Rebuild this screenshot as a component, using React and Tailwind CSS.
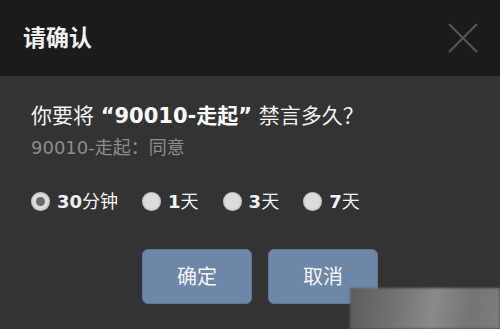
const cjk = { fontFamily: '"DejaVu Sans", "Noto Sans CJK SC", sans-serif' };

const Radio = ({ checked, num, unit }) => (
  <label className="flex items-center gap-[7px] cursor-pointer">
    <span className="flex h-[19px] w-[19px] items-center justify-center rounded-full bg-[#dcdcdc] shadow-[inset_0_0_2px_#888]">
      {checked && <span className="h-[9px] w-[9px] rounded-full bg-[#6a6a6a]" />}
    </span>
    <span className="text-[18px] leading-none text-[#f2f2f2]">
      <span className="font-bold">{num}</span>
      {unit}
    </span>
  </label>
);

export default function App() {
  const options = [
    { num: "30", unit: "分钟", checked: true },
    { num: "1", unit: "天" },
    { num: "3", unit: "天" },
    { num: "7", unit: "天" },
  ];

  return (
    <div className="relative h-[329px] w-[500px] overflow-hidden bg-[#333333]" style={cjk}>
      <div className="flex h-[76px] items-center justify-between bg-[#1b1b1b] pl-[23px] pr-[21px]">
        <h1 className="text-[23px] font-bold text-[#f0f0f0]">请确认</h1>
        <button className="h-[32px] w-[32px] text-[#555555]">
          <svg viewBox="0 0 32 32" className="h-full w-full" fill="none" stroke="currentColor" strokeWidth="2.2">
            <path d="M2 2 L30 30 M30 2 L2 30" />
          </svg>
        </button>
      </div>

      <div className="pl-[31px] pt-[25px]">
        <p className="text-[21px] leading-[30px] text-[#f4f4f4]">
          你要将 <span className="font-bold text-white">“90010-走起”</span> 禁言多久？
        </p>
        <p className="mt-[5px] text-[18px] leading-[24px] text-[#8c8c8c]">90010-走起：同意</p>

        <div className="mt-[32px] flex items-center gap-[24px]">
          {options.map((o) => (
            <Radio key={o.num} {...o} />
          ))}
        </div>
      </div>

      <div className="mt-[38px] flex justify-center gap-[16px] pr-[2px] pl-[22px]">
        <button className="h-[55px] w-[110px] rounded-[6px] border border-[#5e7898] bg-[#6d87a8] text-[20px] text-[#f5f5f5]">
          确定
        </button>
        <button className="h-[55px] w-[110px] rounded-[6px] border border-[#5e7898] bg-[#6d87a8] text-[20px] text-[#f5f5f5]">
          取消
        </button>
      </div>

      <div className="absolute bottom-0 right-0 h-[41px] w-[150px] bg-[linear-gradient(100deg,#5c5c5c_0%,#727272_30%,#8a8a8a_55%,#747474_80%,#7e7e7e_100%)] blur-[1px]" />
    </div>
  );
}
